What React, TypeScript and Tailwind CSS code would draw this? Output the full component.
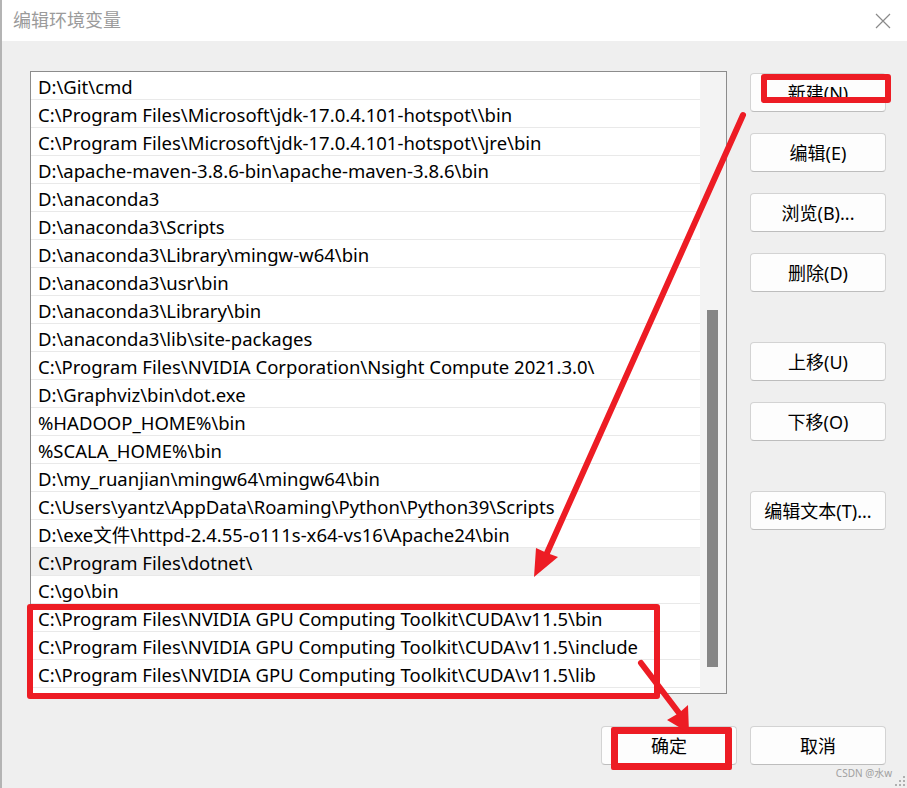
import React from 'react';

const font = { fontFamily: '"Noto Sans", "Noto Sans CJK SC", sans-serif' };

const paths = [
  'D:\\Git\\cmd',
  'C:\\Program Files\\Microsoft\\jdk-17.0.4.101-hotspot\\\\bin',
  'C:\\Program Files\\Microsoft\\jdk-17.0.4.101-hotspot\\\\jre\\bin',
  'D:\\apache-maven-3.8.6-bin\\apache-maven-3.8.6\\bin',
  'D:\\anaconda3',
  'D:\\anaconda3\\Scripts',
  'D:\\anaconda3\\Library\\mingw-w64\\bin',
  'D:\\anaconda3\\usr\\bin',
  'D:\\anaconda3\\Library\\bin',
  'D:\\anaconda3\\lib\\site-packages',
  'C:\\Program Files\\NVIDIA Corporation\\Nsight Compute 2021.3.0\\',
  'D:\\Graphviz\\bin\\dot.exe',
  '%HADOOP_HOME%\\bin',
  '%SCALA_HOME%\\bin',
  'D:\\my_ruanjian\\mingw64\\mingw64\\bin',
  'C:\\Users\\yantz\\AppData\\Roaming\\Python\\Python39\\Scripts',
  'D:\\exe文件\\httpd-2.4.55-o111s-x64-vs16\\Apache24\\bin',
  'C:\\Program Files\\dotnet\\',
  'C:\\go\\bin',
  'C:\\Program Files\\NVIDIA GPU Computing Toolkit\\CUDA\\v11.5\\bin',
  'C:\\Program Files\\NVIDIA GPU Computing Toolkit\\CUDA\\v11.5\\include',
  'C:\\Program Files\\NVIDIA GPU Computing Toolkit\\CUDA\\v11.5\\lib',
];

function Btn({ label }: { label: string }) {
  return (
    <div className="h-[39px] w-[136px] pt-[2px] bg-[#fdfdfd] border border-[#d3d3d3] border-b-[#bdbdbd] rounded-[4px] flex items-center justify-center text-[18px] text-black">
      {label}
    </div>
  );
}

export default function App() {
  return (
    <div
      className="relative w-[907px] h-[788px] bg-[#efefef] border-l-2 border-[#b4b4b4] flex flex-col overflow-hidden"
      style={font}
    >
      {/* title bar */}
      <div className="h-[41px] bg-white flex items-center justify-between pl-[11px] pr-[16px] flex-shrink-0">
        <span className="text-[18px] text-[#9b9b9b]">编辑环境变量</span>
        <svg width="16" height="16" viewBox="0 0 16 16">
          <path d="M1 1 L15 15 M15 1 L1 15" stroke="#8a8a8a" strokeWidth="1.2" fill="none" />
        </svg>
      </div>

      {/* main */}
      <div className="flex pt-[30px] pl-[28px]">
        <div className="w-[697px] h-[623px] bg-white border border-[#8c8c8c] flex">
          <div className="flex-1 flex flex-col">
            {paths.map((p, i) => (
              <div
                key={i}
                className={
                  'h-[28px] flex items-center pl-[7px] pt-[3px] text-[18.5px] text-black whitespace-nowrap border-b border-[#e9e9e9] ' +
                  (i === 17 ? 'bg-[#f0f0f0]' : '')
                }
              >
                {p}
              </div>
            ))}
          </div>
          <div className="w-[26px] bg-[#f3f3f3] pt-[238px] pl-[7px]">
            <div className="w-[11px] h-[357px] bg-[#868686]" />
          </div>
        </div>

        <div className="ml-[23px] mt-[2px] flex flex-col">
          <div className="flex flex-col gap-[21px]">
            <Btn label="新建(N)" />
            <Btn label="编辑(E)" />
            <Btn label="浏览(B)..." />
            <Btn label="删除(D)" />
          </div>
          <div className="flex flex-col gap-[21px] mt-[50px]">
            <Btn label="上移(U)" />
            <Btn label="下移(O)" />
          </div>
          <div className="mt-[50px]">
            <Btn label="编辑文本(T)..." />
          </div>
        </div>
      </div>

      {/* bottom buttons */}
      <div className="flex justify-end gap-[13px] pr-[21px] mt-[32px]">
        <Btn label="确定" />
        <Btn label="取消" />
      </div>

      <div className="flex justify-end pr-[15px] mt-[1px]">
        <span className="text-[10px] text-[#a0a0a0]">CSDN @水w</span>
      </div>

      {/* resize grip */}
      <svg className="absolute right-[1px] bottom-[1px]" width="12" height="12" viewBox="0 0 12 12">
        {[[9, 1], [5, 5], [9, 5], [1, 9], [5, 9], [9, 9]].map(([x, y], i) => (
          <rect key={i} x={x} y={y} width="2" height="2" fill="#b0b0b0" />
        ))}
      </svg>

      {/* red annotations */}
      <div className="absolute left-[759px] top-[74px] w-[130px] h-[29px] border-[6px] border-[#ed1c24] rounded-[3px] pointer-events-none" />
      <div className="absolute left-[25px] top-[604px] w-[633px] h-[95px] border-[6px] border-[#ed1c24] rounded-[3px] pointer-events-none" />
      <div className="absolute left-[609px] top-[727px] w-[121px] h-[43px] border-[7px] border-[#ed1c24] rounded-[2px] pointer-events-none" />
      <svg className="absolute left-0 top-0 pointer-events-none" width="907" height="788">
        <line x1="741" y1="115" x2="545" y2="553" stroke="#ed1c24" strokeWidth="6" strokeLinecap="round" />
        <polygon points="532,577 534,548 545,553 556,557" fill="#ed1c24" />
        <line x1="639" y1="663" x2="677" y2="713" stroke="#ed1c24" strokeWidth="6" strokeLinecap="round" />
        <polygon points="687,733 665,720 677,713 686,705" fill="#ed1c24" />
      </svg>
    </div>
  );
}
